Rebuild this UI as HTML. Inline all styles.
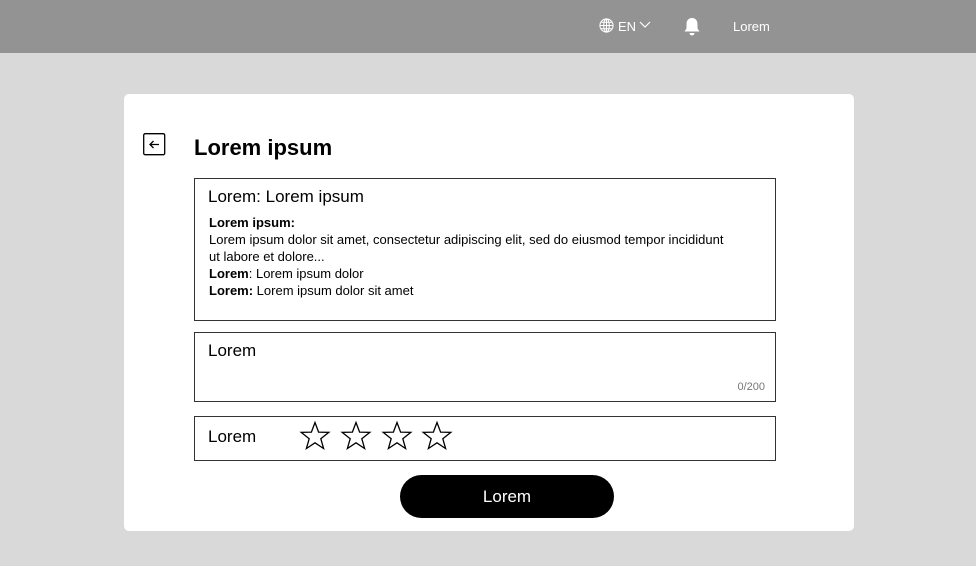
<!DOCTYPE html>
<html><head><style>
*{margin:0;padding:0;box-sizing:border-box}
body{width:976px;height:566px;background:#d9d9d9;font-family:"Liberation Sans",sans-serif;position:relative;overflow:hidden;color:#000}
.hdr{position:absolute;left:0;top:0;width:976px;height:53px;background:#939393;color:#fff;font-size:13px}
.abs{position:absolute}
.card{position:absolute;left:124px;top:94px;width:730px;height:437px;background:#fff;border-radius:5px}
.box{position:absolute;left:194px;width:582px;border:1px solid #333}
.t{font-size:13px;line-height:17px}
</style></head><body>
<div class="hdr">
 <svg class="abs" style="left:599px;top:18px" width="15" height="15" viewBox="0 0 16 16" fill="none" stroke="#fff" stroke-width="1.1"><circle cx="8" cy="8" r="7"/><ellipse cx="8" cy="8" rx="3" ry="7"/><path d="M1 8h14M2 4.5h12M2 11.5h12M8 1v14"/></svg>
 <div class="abs" style="left:618px;top:19px">EN</div>
 <svg class="abs" style="left:639px;top:21px" width="12" height="8" viewBox="0 0 12 8" fill="none" stroke="#fff" stroke-width="1.2"><path d="M1 1l5 5 5-5"/></svg>
 <svg class="abs" style="left:683px;top:17px" width="18" height="19" viewBox="0 0 18 19" fill="#fff"><path d="M9 1c-3.5 0-5.5 2.6-5.5 6v4.5L1.5 14.5h15L14.5 11.5V7C14.5 3.6 12.5 1 9 1z"/><path d="M6.5 16a2.5 2.5 0 0 0 5 0z"/></svg>
 <div class="abs" style="left:733px;top:19px">Lorem</div>
</div>
<div class="card"></div>
<svg class="abs" style="left:143px;top:133px" width="23" height="23" viewBox="0 0 23 23" fill="none" stroke="#000" stroke-width="1.3"><rect x="0.7" y="0.7" width="21" height="21" rx="1.5"/><path d="M16 11.5H7M10.5 8l-3.5 3.5 3.5 3.5"/></svg>
<div class="abs" style="left:194px;top:135px;font-size:22px;font-weight:bold">Lorem ipsum</div>
<div class="box" style="top:178px;height:143px">
 <div class="abs" style="left:13px;top:8px;font-size:17px">Lorem: Lorem ipsum</div>
 <div class="abs t" style="left:14px;top:35px;width:525px">
  <b>Lorem ipsum:</b><br>Lorem ipsum dolor sit amet, consectetur adipiscing elit, sed do eiusmod tempor incididunt ut labore et dolore...<br><b>Lorem</b>: Lorem ipsum dolor<br><b>Lorem:</b> Lorem ipsum dolor sit amet
 </div>
</div>
<div class="box" style="top:332px;height:70px">
 <div class="abs" style="left:13px;top:8px;font-size:17px">Lorem</div>
 <div class="abs" style="right:10px;top:48px;font-size:11px;color:#777">0/200</div>
</div>
<div class="box" style="top:416px;height:45px">
 <div class="abs" style="left:13px;top:10px;font-size:17px">Lorem</div>
</div>
<svg class="abs" style="left:299px;top:421px" width="160" height="30" viewBox="0 0 160 30" fill="none" stroke="#000" stroke-width="1.3" stroke-linejoin="miter">
 <defs><path id="s" d="M16 1.5l3.6 9.6 10.2.3-8 6.3 2.8 9.8L16 21.8l-8.6 5.7 2.8-9.8-8-6.3 10.2-.3z"/></defs>
 <use href="#s"/><use href="#s" x="41"/><use href="#s" x="82"/><use href="#s" x="122"/>
</svg>
<div class="abs" style="left:400px;top:475px;width:214px;height:43px;background:#000;border-radius:22px;color:#fff;font-size:17px;text-align:center;line-height:43px">Lorem</div>
</body></html>
